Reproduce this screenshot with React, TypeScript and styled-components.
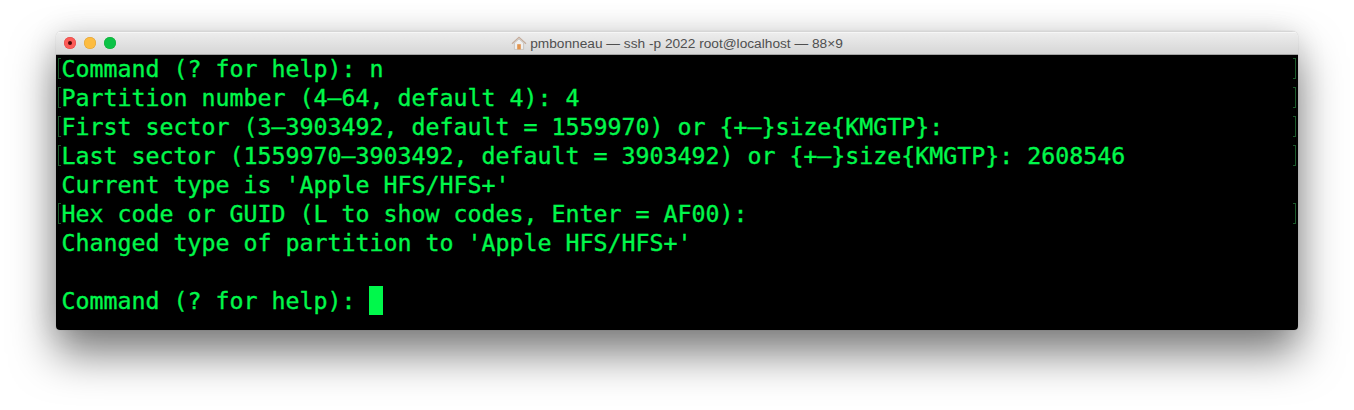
import React from 'react'
import styled, { createGlobalStyle } from 'styled-components'

const GlobalStyle = createGlobalStyle`
  html, body {
    margin: 0;
    padding: 0;
    background: #fff;
    overflow: hidden;
  }
`

const lines = [
  { text: 'Command (? for help): n', marked: true },
  { text: 'Partition number (4–64, default 4): 4', marked: true },
  { text: 'First sector (3–3903492, default = 1559970) or {+–}size{KMGTP}:', marked: true },
  { text: 'Last sector (1559970–3903492, default = 3903492) or {+–}size{KMGTP}: 2608546', marked: true },
  { text: "Current type is 'Apple HFS/HFS+'", marked: false },
  { text: 'Hex code or GUID (L to show codes, Enter = AF00):', marked: true },
  { text: "Changed type of partition to 'Apple HFS/HFS+'", marked: false },
  { text: '', marked: false },
]

const App = () => {
  return (
    <Page>
      <GlobalStyle />
      <Window>
        <TitleBar>
          <Lights>
            <Light $color="#fc5b57" $border="#df4744">
              <CloseDot />
            </Light>
            <Light $color="#fdbc40" $border="#de9f34" />
            <Light $color="#0bc246" $border="#12ac35" />
          </Lights>
          <Title>
            <svg width="16" height="14" viewBox="0 0 16 14">
              <path d="M3.4 7v6.4h9.2V7L8 3z" fill="#efefef" stroke="#bdb8b2" strokeWidth="0.7" />
              <path d="M1 7.8 8 1.4l7 6.4" fill="none" stroke="#c4ab9a" strokeWidth="1.2" />
              <rect x="6.2" y="8.2" width="3.6" height="5.2" fill="#e2944e" />
            </svg>
            <span>pmbonneau — ssh -p 2022 root@localhost — 88×9</span>
          </Title>
        </TitleBar>
        <Terminal>
          {lines.map((line, i) => (
            <Line key={i} $marked={line.marked}>
              {line.text}
            </Line>
          ))}
          <Line $marked={false}>
            Command (? for help): <Cursor />
          </Line>
        </Terminal>
      </Window>
    </Page>
  )
}

const Page = styled.main`
  width: 1354px;
  height: 410px;
  box-sizing: border-box;
  padding: 31px 56px 0;
  background: #fff;
`

const Window = styled.section`
  width: 1242px;
  height: 299px;
  display: flex;
  flex-direction: column;
  border-radius: 6px 6px 4px 4px;
  overflow: hidden;
  box-shadow: 0 24px 44px rgba(0, 0, 0, 0.5), 0 0 1px rgba(0, 0, 0, 0.3), 0 0 30px rgba(0, 0, 0, 0.1);
`

const TitleBar = styled.header`
  position: relative;
  height: 22px;
  flex: none;
  display: flex;
  align-items: center;
  justify-content: center;
  background: linear-gradient(#eeeeee, #d6d6d6);
  border-top: 1px solid #d6d6d6;
  border-bottom: 1px solid #a4a4a4;
  box-shadow: inset 0 1px 0 #f6f6f6;
`

const Lights = styled.div`
  position: absolute;
  left: 8px;
  top: 5px;
  display: flex;
  gap: 8px;
`

const Light = styled.span<{ $color: string; $border: string }>`
  width: 12px;
  height: 12px;
  border-radius: 50%;
  display: flex;
  align-items: center;
  justify-content: center;
  background: ${p => p.$color};
  box-shadow: inset 0 0 0 0.5px ${p => p.$border};
`

const CloseDot = styled.span`
  width: 4px;
  height: 4px;
  border-radius: 50%;
  background: #4d0504;
`

const Title = styled.div`
  display: flex;
  align-items: center;
  gap: 3px;
  font-family: 'Liberation Sans', Arial, sans-serif;
  font-size: 13.7px;
  color: #4f4f4f;
`

const Terminal = styled.div`
  flex: 1;
  background: #000;
  padding: 0 5.5px;
  font-family: 'DejaVu Sans Mono', monospace;
  font-size: 23.25px;
  color: #00f84b;
  -webkit-text-stroke: 0.35px #00f84b;
`

const Line = styled.div<{ $marked: boolean }>`
  position: relative;
  height: 29px;
  line-height: 27px;
  white-space: pre;

  ${p =>
    p.$marked &&
    `
    &::before, &::after {
      content: '';
      position: absolute;
      top: 3px;
      width: 2px;
      height: 19px;
      border: 1px solid #1b5a2b;
    }
    &::before {
      left: -4px;
      border-right: none;
    }
    &::after {
      right: -3px;
      border-left: none;
    }
  `}
`

const Cursor = styled.span`
  display: inline-block;
  width: 14px;
  height: 29px;
  margin-top: -1px;
  vertical-align: top;
  background: #00f84b;
`

export default App
